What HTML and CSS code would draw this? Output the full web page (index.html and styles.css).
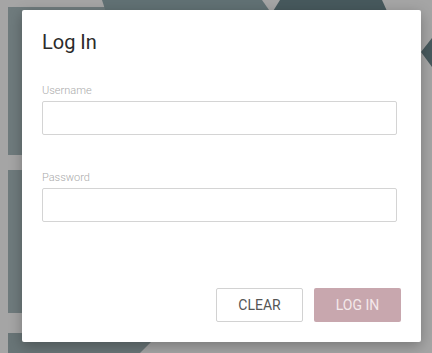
FILE: index.html
```html
<!DOCTYPE html>
<html lang="en">

<head>
    <meta charset="UTF-8">
    <meta name="viewport" content="width=device-width, initial-scale=1.0">
    <title>Log In</title>
    <link rel="stylesheet" href="styles.css">
</head>

<body>

    <svg class="backdrop" width="432" height="353" viewBox="0 0 432 353">
        <rect x="8" y="7" width="200" height="148" fill="#6f7b7d" />
        <rect x="8" y="170" width="200" height="143" fill="#6f7b7d" />
        <polygon points="8,333 160,333 140,353 8,353" fill="#697577" />
        <polygon points="102,0 262,0 290,40 115,40" fill="#617174" />
        <polygon points="280,0 382,0 400,40 255,40" fill="#47595d" />
        <polygon points="432,38 421,52 432,67" fill="#47595d" />
    </svg>

    <div class="dialog">
        <h1 class="dialog-title">Log In</h1>

        <form class="login-form" onsubmit="return false">
            <label class="field-label" for="username">Username</label>
            <input class="field-input" id="username" type="text">

            <label class="field-label" for="password">Password</label>
            <input class="field-input" id="password" type="password">

            <div class="actions">
                <button type="reset" class="clear-button">Clear</button>
                <button type="submit" class="login-button" disabled>Log In</button>
            </div>
        </form>
    </div>

</body>

</html>
```

FILE: styles.css
```css
body {
    margin: 0;
    padding: 0;
    width: 432px;
    height: 353px;
    overflow: hidden;
    background-color: #a5a5a5;
    font-family: Roboto, "Liberation Sans", Arial, sans-serif;
}

.backdrop {
    display: block;
}

.dialog {
    position: absolute;
    left: 22px;
    top: 10px;
    width: 359px;
    padding: 20px;
    background-color: #fff;
    border-radius: 2px;
    box-shadow: 0 4px 14px rgba(0, 0, 0, 0.28);
}

.dialog-title {
    margin: 0;
    font-size: 20px;
    line-height: 24px;
    font-weight: 400;
    color: #2b2b2b;
}

.login-form {
    display: flex;
    flex-direction: column;
}

.field-label {
    margin-top: 30px;
    margin-bottom: 4px;
    font-size: 11px;
    line-height: 13px;
    font-weight: 300;
    color: #aaa;
}

.login-form .field-label:nth-of-type(2) {
    margin-top: 36px;
}

.field-input {
    box-sizing: border-box;
    width: 355px;
    height: 34px;
    margin: 0;
    border: 1px solid #d4d4d4;
    border-radius: 2px;
    background-color: #fff;
    font-family: inherit;
    font-size: 14px;
}

.actions {
    display: flex;
    justify-content: flex-end;
    gap: 11px;
    margin-top: 66px;
}

.clear-button,
.login-button {
    box-sizing: border-box;
    width: 87px;
    height: 34px;
    border-radius: 2px;
    font-family: inherit;
    font-size: 14px;
    text-transform: uppercase;
    cursor: pointer;
}

.clear-button {
    background-color: #fff;
    border: 1px solid #d2d2d2;
    color: #555;
}

.login-button {
    background-color: #c8a7ae;
    border: none;
    color: #f4e9eb;
}
```
